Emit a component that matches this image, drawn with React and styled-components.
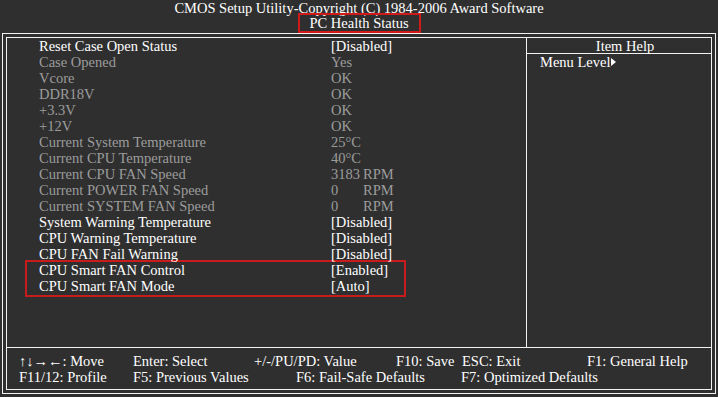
import React from 'react';
import styled, { createGlobalStyle } from 'styled-components';

const GlobalStyle = createGlobalStyle`
  html, body {
    margin: 0;
    padding: 0;
    background: #2f2f2f;
  }
  body {
    width: 718px;
    height: 397px;
    overflow: hidden;
    font-family: "Liberation Serif", "Times New Roman", serif;
    font-size: 14.5px;
    color: #fff;
  }
`;

const Screen = styled.div`
  width: 718px;
  height: 397px;
  box-sizing: border-box;
  padding-top: 1px;
  display: flex;
  flex-direction: column;
  align-items: center;
  background: #2f2f2f;
`;

const Title = styled.div`
  line-height: 13px;
  height: 13px;
  padding-top: 1px;
  margin-bottom: -2px;
  text-align: center;
  white-space: nowrap;
`;

const PageName = styled.div`
  border: 2px solid #d01a1a;
  padding: 0 10px;
  line-height: 16px;
  width: 99px;
  text-align: center;
  white-space: nowrap;
`;

const Frame = styled.div`
  width: 714px;
  height: 361px;
  box-sizing: border-box;
  border: 1px solid #f2f2f2;
  padding: 3px;
  margin-left: 2px;
  align-self: flex-start;
`;

const Inner = styled.div`
  height: 100%;
  box-sizing: border-box;
  border: 1px solid #f2f2f2;
  display: flex;
  flex-direction: column;
`;

const Main = styled.div`
  flex: 1 1 auto;
  display: flex;
  border-bottom: 1px solid #f2f2f2;
`;

const Settings = styled.div`
  width: 519px;
  padding: 0 0 0 32px;
  box-sizing: border-box;
`;

const Row = styled.div`
  display: flex;
  line-height: 16px;
  height: 16px;
  white-space: nowrap;
  color: ${props => (props.$disabled ? '#9c9c9c' : '#ffffff')};
`;

const Label = styled.span`
  width: 292px;
  flex: 0 0 auto;
`;

const Value = styled.span`
  flex: 0 0 auto;
`;

const Num = styled.span`
  display: inline-block;
  width: 32px;
`;

const Highlight = styled.div`
  width: 381px;
  box-sizing: border-box;
  border: 2px solid #c81c1c;
  margin: -2px 0 0 -14px;
  padding: 0 0 1px 12px;
`;

const Help = styled.div`
  flex: 1 1 auto;
  border-left: 1px solid #f2f2f2;
  display: flex;
  flex-direction: column;
`;

const HelpHead = styled.div`
  line-height: 16px;
  height: 15px;
  padding-left: 12px;
  text-align: center;
  border-bottom: 1px solid #f2f2f2;
`;

const HelpText = styled.div`
  line-height: 16px;
  padding-left: 13px;
  display: flex;
  align-items: center;
`;

const Arrow = styled.span`
  display: inline-block;
  width: 0;
  height: 0;
  border-top: 4px solid transparent;
  border-bottom: 4px solid transparent;
  border-left: 5px solid #fff;
  margin-left: 1px;
`;

const Footer = styled.div`
  height: 41px;
  box-sizing: border-box;
  padding: 5px 0 0 12px;
`;

const KeyRow = styled.div`
  display: flex;
  line-height: 16px;
  white-space: nowrap;
`;

const Key = styled.span`
  flex: 0 0 auto;
  width: ${props => (props.$w ? `${props.$w}px` : 'auto')};
`;

const rows = [
  { label: 'Reset Case Open Status', value: '[Disabled]' },
  { label: 'Case Opened', value: 'Yes', disabled: true },
  { label: 'Vcore', value: 'OK', disabled: true },
  { label: 'DDR18V', value: 'OK', disabled: true },
  { label: '+3.3V', value: 'OK', disabled: true },
  { label: '+12V', value: 'OK', disabled: true },
  { label: 'Current System Temperature', value: '25°C', disabled: true },
  { label: 'Current CPU Temperature', value: '40°C', disabled: true },
  { label: 'Current CPU FAN Speed', num: '3183', unit: 'RPM', disabled: true },
  { label: 'Current POWER FAN Speed', num: '0', unit: 'RPM', disabled: true },
  { label: 'Current SYSTEM FAN Speed', num: '0', unit: 'RPM', disabled: true },
  { label: 'System Warning Temperature', value: '[Disabled]' },
  { label: 'CPU Warning Temperature', value: '[Disabled]' },
  { label: 'CPU FAN Fail Warning', value: '[Disabled]' },
];

const smartRows = [
  { label: 'CPU Smart FAN Control', value: '[Enabled]' },
  { label: 'CPU Smart FAN Mode', value: '[Auto]' },
];

const keysTop = [
  { text: '↑↓→←: Move', w: 114 },
  { text: 'Enter: Select', w: 121 },
  { text: '+/-/PU/PD: Value', w: 142 },
  { text: 'F10: Save', w: 66 },
  { text: 'ESC: Exit', w: 125 },
  { text: 'F1: General Help' },
];

const keysBottom = [
  { text: 'F11/12: Profile', w: 114 },
  { text: 'F5: Previous Values', w: 163 },
  { text: 'F6: Fail-Safe Defaults', w: 165 },
  { text: 'F7: Optimized Defaults' },
];

function SettingRow({ item }) {
  return (
    <Row $disabled={item.disabled}>
      <Label>{item.label}</Label>
      <Value>
        {item.unit ? (
          <>
            <Num>{item.num}</Num>
            {item.unit}
          </>
        ) : (
          item.value
        )}
      </Value>
    </Row>
  );
}

export default function App() {
  return (
    <Screen>
      <GlobalStyle />
      <Title>CMOS Setup Utility-Copyright (C) 1984-2006 Award Software</Title>
      <PageName>PC Health Status</PageName>

      <Frame>
        <Inner>
          <Main>
            <Settings>
              {rows.map(item => (
                <SettingRow key={item.label} item={item} />
              ))}
              <Highlight>
                {smartRows.map(item => (
                  <SettingRow key={item.label} item={item} />
                ))}
              </Highlight>
            </Settings>

            <Help>
              <HelpHead>Item Help</HelpHead>
              <HelpText>
                Menu Level
                <Arrow />
              </HelpText>
            </Help>
          </Main>

          <Footer>
            <KeyRow>
              {keysTop.map(k => (
                <Key key={k.text} $w={k.w}>{k.text}</Key>
              ))}
            </KeyRow>
            <KeyRow>
              {keysBottom.map(k => (
                <Key key={k.text} $w={k.w}>{k.text}</Key>
              ))}
            </KeyRow>
          </Footer>
        </Inner>
      </Frame>
    </Screen>
  );
}
